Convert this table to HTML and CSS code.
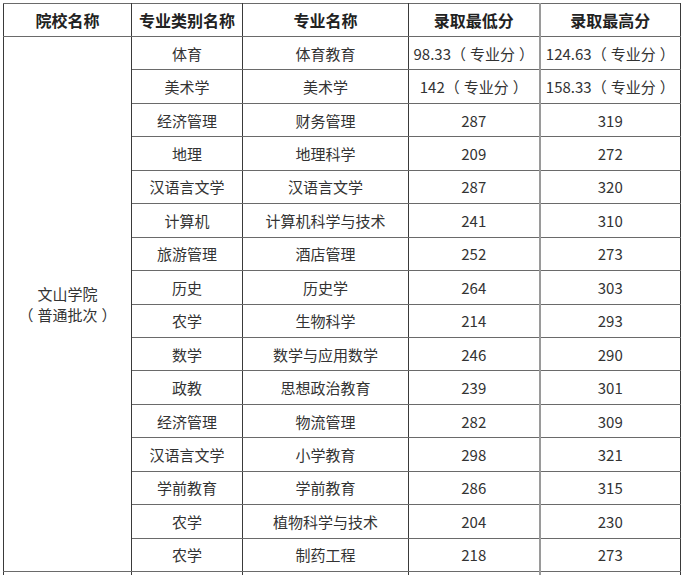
FILE: index.html
```html
<!DOCTYPE html>
<html lang="zh">
<head>
<meta charset="utf-8">
<link rel="stylesheet" href="styles.css">
</head>
<body>
<table class="score">
  <colgroup>
    <col class="c1"><col class="c2"><col class="c3"><col class="c4"><col class="c5">
  </colgroup>
  <thead>
    <tr class="head">
      <th>院校名称</th><th>专业类别名称</th><th>专业名称</th><th>录取最低分</th><th class="sep">录取最高分</th>
    </tr>
  </thead>
  <tbody>
    <tr><td class="school" rowspan="16">文山学院<br><span class="lp">（</span>普通批次<span class="rp">）</span></td><td>体育</td><td>体育教育</td><td>98.33<span class="lp">（</span>专业分<span class="rp">）</span></td><td class="sep">124.63<span class="lp">（</span>专业分<span class="rp">）</span></td></tr>
    <tr><td>美术学</td><td>美术学</td><td>142<span class="lp">（</span>专业分<span class="rp">）</span></td><td class="sep">158.33<span class="lp">（</span>专业分<span class="rp">）</span></td></tr>
    <tr><td>经济管理</td><td>财务管理</td><td>287</td><td class="sep">319</td></tr>
    <tr><td>地理</td><td>地理科学</td><td>209</td><td class="sep">272</td></tr>
    <tr><td>汉语言文学</td><td>汉语言文学</td><td>287</td><td class="sep">320</td></tr>
    <tr><td>计算机</td><td>计算机科学与技术</td><td>241</td><td class="sep">310</td></tr>
    <tr><td>旅游管理</td><td>酒店管理</td><td>252</td><td class="sep">273</td></tr>
    <tr><td>历史</td><td>历史学</td><td>264</td><td class="sep">303</td></tr>
    <tr><td>农学</td><td>生物科学</td><td>214</td><td class="sep">293</td></tr>
    <tr><td>数学</td><td>数学与应用数学</td><td>246</td><td class="sep">290</td></tr>
    <tr><td>政教</td><td>思想政治教育</td><td>239</td><td class="sep">301</td></tr>
    <tr><td>经济管理</td><td>物流管理</td><td>282</td><td class="sep">309</td></tr>
    <tr><td>汉语言文学</td><td>小学教育</td><td>298</td><td class="sep">321</td></tr>
    <tr><td>学前教育</td><td>学前教育</td><td>286</td><td class="sep">315</td></tr>
    <tr><td>农学</td><td>植物科学与技术</td><td>204</td><td class="sep">230</td></tr>
    <tr><td>农学</td><td>制药工程</td><td>218</td><td class="sep">273</td></tr>
    <tr class="tail"><td></td><td></td><td></td><td></td><td class="sep"></td></tr>
  </tbody>
</table>
</body>
</html>
```
FILE: styles.css
```css
html, body {
  margin: 0;
  padding: 0;
  background: #ffffff;
  overflow: hidden;
}
body {
  padding: 3px 0 0 3px;
  font-family: "Noto Sans CJK SC", "Noto Sans", sans-serif;
  color: #333333;
}
.score {
  border-collapse: collapse;
  table-layout: fixed;
  width: 677px;
}
.c1 { width: 128px; }
.c2 { width: 111px; }
.c3 { width: 166px; }
.c4 { width: 131px; }
.c5 { width: 141px; }
.score th,
.score td {
  border-left: 1px solid #3a3a3a;
  border-right: 1px solid #3a3a3a;
  border-top: 1px solid #6a6a6a;
  border-bottom: 1px solid #6a6a6a;
  padding: 0;
  text-align: center;
  vertical-align: middle;
  white-space: nowrap;
  overflow: hidden;
}
.score th {
  height: 32px;
  font-size: 16px;
  font-weight: 700;
  color: #222222;
}
.score td {
  height: 32.45px;
  font-size: 15px;
  font-weight: 400;
}
.score .sep {
  border-left: 2px solid #9a9a9a;
}
.score td.school {
  line-height: 21px;
  white-space: normal;
}
.lp {
  margin-left: 0;
  margin-right: 4px;
}
.rp {
  margin-left: 4px;
  margin-right: 0;
}
```
